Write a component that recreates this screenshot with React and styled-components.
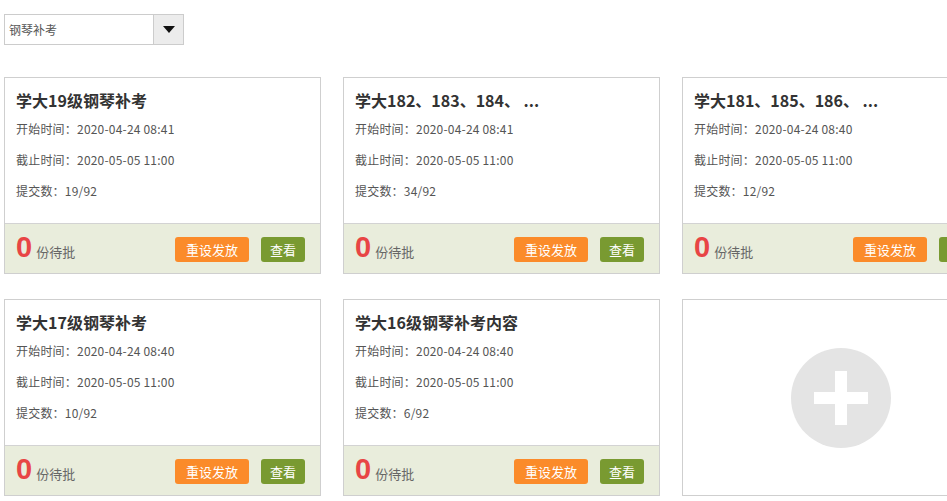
import styled, { createGlobalStyle } from 'styled-components';

const GlobalStyle = createGlobalStyle`
  html, body {
    margin: 0;
    padding: 0;
    overflow: hidden;
    background: #fff;
    font-family: "Microsoft YaHei", "Noto Sans CJK SC", "Noto Sans", sans-serif;
  }
`;

const tasks = [
  { title: '学大19级钢琴补考', start: '2020-04-24 08:41', end: '2020-05-05 11:00', done: '19/92' },
  { title: '学大182、183、184、 ...', start: '2020-04-24 08:41', end: '2020-05-05 11:00', done: '34/92' },
  { title: '学大181、185、186、 ...', start: '2020-04-24 08:40', end: '2020-05-05 11:00', done: '12/92' },
  { title: '学大17级钢琴补考', start: '2020-04-24 08:40', end: '2020-05-05 11:00', done: '10/92' },
  { title: '学大16级钢琴补考内容', start: '2020-04-24 08:40', end: '2020-05-05 11:00', done: '6/92' },
];

const App = () => {
  return (
    <Page>
      <GlobalStyle />
      <Select>
        <SelectText>钢琴补考</SelectText>
        <SelectArrow>
          <svg width="12" height="7" viewBox="0 0 12 7"><path d="M0 0h12L6 7z" fill="#111" /></svg>
        </SelectArrow>
      </Select>
      <Grid>
        {tasks.map((t, i) => (
          <Card key={i}>
            <Body>
              <Title>{t.title}</Title>
              <Line>开始时间：{t.start}</Line>
              <Line>截止时间：{t.end}</Line>
              <Line>提交数：{t.done}</Line>
            </Body>
            <Footer>
              <Pending>
                <Count>0</Count>
                <PendingLabel>份待批</PendingLabel>
              </Pending>
              <Actions>
                <Button $color="#fb8b2a" $width="74px">重设发放</Button>
                <Button $color="#799a31" $width="44px">查看</Button>
              </Actions>
            </Footer>
          </Card>
        ))}
        <AddCard>
          <AddCircle />
        </AddCard>
      </Grid>
    </Page>
  );
};

const Page = styled.div`
  padding: 14px 4px 0;
`;

const Select = styled.div`
  display: flex;
  width: 180px;
  height: 31px;
  box-sizing: border-box;
  border: 1px solid #ccc;
  background: #fff;
`;

const SelectText = styled.div`
  flex: 1;
  display: flex;
  align-items: center;
  padding-left: 4px;
  font-size: 12px;
  color: #555;
`;

const SelectArrow = styled.div`
  width: 29px;
  display: flex;
  align-items: center;
  justify-content: center;
  background: #ececec;
  border-left: 1px solid #ccc;
`;

const Grid = styled.div`
  margin-top: 32px;
  display: grid;
  grid-template-columns: repeat(3, 317px);
  column-gap: 22px;
  row-gap: 25px;
  width: 1000px;
`;

const Card = styled.div`
  box-sizing: border-box;
  height: 197px;
  border: 1px solid #cfcfcf;
  display: flex;
  flex-direction: column;
  background: #fff;
`;

const Body = styled.div`
  flex: 1;
  padding: 11px 11px 0;
`;

const Title = styled.div`
  font-size: 16px;
  font-weight: bold;
  color: #333;
  line-height: 22px;
  white-space: nowrap;
`;

const Line = styled.div`
  font-size: 12px;
  color: #555;
  line-height: 16px;
  margin-top: 10px;
  letter-spacing: 0.2px;
  & + & {
    margin-top: 15px;
  }
`;

const Footer = styled.div`
  height: 50px;
  box-sizing: border-box;
  border-top: 1px solid #d3d3d3;
  background: #e9eddc;
  display: flex;
  align-items: center;
  justify-content: space-between;
  padding: 0 15px 0 11px;
`;

const Pending = styled.div`
  display: flex;
  align-items: baseline;
  padding-bottom: 2px;
`;

const Count = styled.span`
  font-size: 29px;
  font-weight: bold;
  color: #e84545;
  line-height: 1;
  font-family: "Liberation Sans", Arial, sans-serif;
`;

const PendingLabel = styled.span`
  font-size: 13px;
  color: #666;
  margin-left: 4px;
`;

const Actions = styled.div`
  display: flex;
  gap: 12px;
  padding-top: 1px;
`;

const Button = styled.div`
  width: ${p => p.$width};
  height: 25px;
  border-radius: 3px;
  background: ${p => p.$color};
  color: #fff;
  font-size: 13px;
  display: flex;
  align-items: center;
  justify-content: center;
`;

const AddCard = styled.div`
  box-sizing: border-box;
  height: 197px;
  border: 1px solid #cfcfcf;
  display: flex;
  align-items: center;
  justify-content: center;
`;

const AddCircle = styled.div`
  position: relative;
  width: 100px;
  height: 100px;
  border-radius: 50%;
  background: #e4e4e4;
  &::before, &::after {
    content: '';
    position: absolute;
    background: #fff;
    left: 50%;
    top: 50%;
    transform: translate(-50%, -50%);
  }
  &::before {
    width: 54px;
    height: 12px;
  }
  &::after {
    width: 12px;
    height: 54px;
  }
`;

export default App;
